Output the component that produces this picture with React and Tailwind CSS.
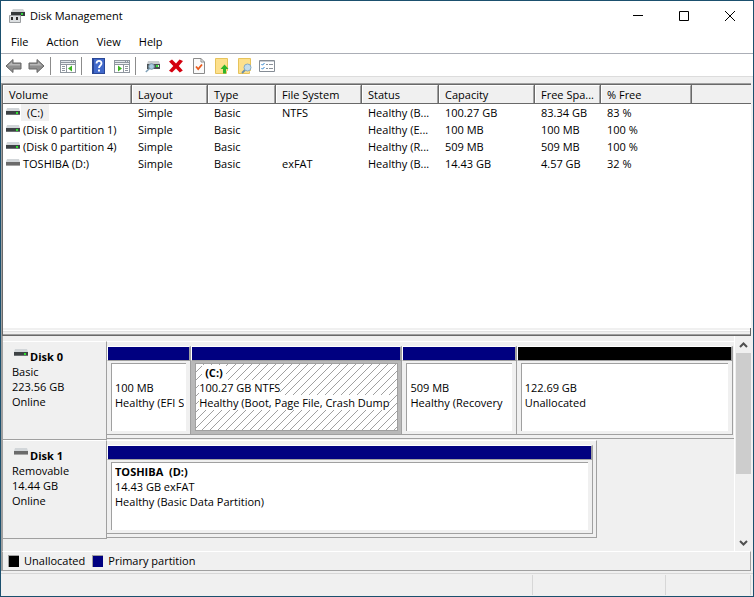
import React from "react";

const columns = [
  { name: "Volume", width: "w-[129px]" },
  { name: "Layout", width: "w-[76px]" },
  { name: "Type", width: "w-[68px]" },
  { name: "File System", width: "w-[86px]" },
  { name: "Status", width: "w-[77px]" },
  { name: "Capacity", width: "w-[96px]" },
  { name: "Free Spa...", width: "w-[66px]" },
  { name: "% Free", width: "w-[91px]" },
];

const volumes = [
  { name: "(C:)", led: true, selected: true, cells: ["Simple", "Basic", "NTFS", "Healthy (B...", "100.27 GB", "83.34 GB", "83 %"] },
  { name: "(Disk 0 partition 1)", led: true, cells: ["Simple", "Basic", "", "Healthy (E...", "100 MB", "100 MB", "100 %"] },
  { name: "(Disk 0 partition 4)", led: true, cells: ["Simple", "Basic", "", "Healthy (R...", "509 MB", "509 MB", "100 %"] },
  { name: "TOSHIBA (D:)", led: false, cells: ["Simple", "Basic", "exFAT", "Healthy (B...", "14.43 GB", "4.57 GB", "32 %"] },
];

const disks = [
  {
    name: "Disk 0", led: true, lines: ["Basic", "223.56 GB", "Online"], wide: true,
    parts: [
      { share: 84, title: "", lines: ["100 MB", "Healthy (EFI S"], color: "bg-[#000080]" },
      { share: 211, title: "(C:)", lines: ["100.27 GB NTFS", "Healthy (Boot, Page File, Crash Dump"], color: "bg-[#000080]", selected: true },
      { share: 114, title: "", lines: ["509 MB", "Healthy (Recovery"], color: "bg-[#000080]" },
      { share: 216, title: "", lines: ["122.69 GB", "Unallocated"], color: "bg-black" },
    ],
  },
  {
    name: "Disk 1", led: false, lines: ["Removable", "14.44 GB", "Online"], wide: false,
    parts: [
      { share: 1, title: "TOSHIBA  (D:)", lines: ["14.43 GB exFAT", "Healthy (Basic Data Partition)"], color: "bg-[#000080]" },
    ],
  },
];

function DriveIcon({ led }) {
  return (
    <svg width="14" height="9" viewBox="0 0 14 9" className="shrink-0" aria-hidden="true">
      <path d="M1 0h12l1 3H0z" fill="#d2d6d9" />
      <path d="M0 3h14v4H0z" fill={led ? "#3d4144" : "#6b6b6b"} />
      <path d="M0 6h14v1H0z" fill={led ? "#6d7174" : "#a5a5a5"} />
      {led && <path d="M10 4h2v2h-2z" fill="#2fe02f" />}
    </svg>
  );
}

function AppIcon() {
  return (
    <svg width="16" height="16" viewBox="0 0 16 16" aria-hidden="true">
      <path d="M4 1h10l2 3H2z" fill="#cfd2d4" />
      <path d="M2 4h14v4H2z" fill="#35393b" />
      <path d="M12 5h2v2h-2z" fill="#2fd13a" />
      <path d="M2 7h9v3H2z" fill="#e4e6e8" />
      <path d="M.5 7.500h11v7H.5z" fill="#dcdfe1" stroke="#9a9da0" />
      <path d="M2 9h2v3H2zM7 9h2v3H7z" fill="#2c2c2c" />
    </svg>
  );
}

function Arrow({ flip }) {
  return (
    <svg width="17" height="16" viewBox="0 0 17 16" className={flip ? "-scale-x-100" : ""} aria-hidden="true">
      <path d="M1 8L8 1.500V5h8v6H8v3.500z" fill="#8f8f8f" stroke="#666" strokeLinejoin="round" />
      <path d="M3 7.500L7 4v2h8v1.500z" fill="#b8b8b8" />
    </svg>
  );
}

function PaneIcon({ right }) {
  return (
    <svg width="16" height="16" viewBox="0 0 16 16" aria-hidden="true">
      <path d="M0 2h16v13H0z" fill="#8f969f" />
      <path d="M1 3h10v1H1zM12 3h1v1h-1zM14 3h1v1h-1z" fill="#dfe4ea" />
      <path d="M1 5h14v1H1z" fill="#eef0f3" />
      <path d={right ? "M1 7h8v7H1zM10 7h5v7h-5z" : "M1 7h5v7H1zM7 7h8v7H7z"} fill="#fff" />
      <path d={right ? "M11 8h3v1h-3zM11 10h3v1h-3zM11 12h3v1h-3z" : "M2 8h3v1H2zM2 10h3v1H2zM2 12h3v1H2z"} fill="#8f969f" />
      <path d={right ? "M4 7.500l4 3-4 3z" : "M12 7.500l-4 3 4 3z"} fill="#3cb521" />
    </svg>
  );
}

function HelpIcon() {
  return (
    <svg width="14" height="16" viewBox="0 0 14 16" aria-hidden="true">
      <path d="M0 0h13v16H0z" fill="#2a4796" />
      <path d="M2 1h10v14H2z" fill="#4169cb" />
      <path d="M4.500 5.500c0-3.500 5-3.500 5 0 0 2-2.500 2-2.500 4.500" fill="none" stroke="#fff" strokeWidth="1.800" />
      <path d="M6 11.500h2v2H6z" fill="#fff" />
    </svg>
  );
}

function DriveSearchIcon() {
  return (
    <svg width="16" height="16" viewBox="0 0 16 16" aria-hidden="true">
      <path d="M3 3h11l1 3H2z" fill="#c9cccf" />
      <path d="M2 6h13v5H2z" fill="#4a4f52" />
      <path d="M11 7h2v2h-2z" fill="#35e03b" />
      <path d="M13 7h1v2h-1z" fill="#d8f0d8" />
      <path d="M4.500 10.500L.8 14" stroke="#7fa0b8" strokeWidth="1.500" />
      <circle cx="6.500" cy="8.500" r="2.800" fill="#a9cbe0" stroke="#7795a8" />
    </svg>
  );
}

function DeleteIcon() {
  return (
    <svg width="16" height="16" viewBox="0 0 16 16" aria-hidden="true">
      <path d="M1 3.500L4 1.500l4 4 3.500-4L15 3l-4.200 5 4 4.500-3 2L8 10.500 4 14.500l-3-1.800L5.300 8z" fill="#d4000f" />
    </svg>
  );
}

function CheckDocIcon() {
  return (
    <svg width="14" height="16" viewBox="0 0 14 16" aria-hidden="true">
      <path d="M1.500.5H9L12.500 4v11.500h-11z" fill="#fafafa" stroke="#8b8b8b" />
      <path d="M9 .5V4h3.500" fill="none" stroke="#8b8b8b" />
      <path d="M4 8.500l2.200 2.500L10 6.500" fill="none" stroke="#ea5a1c" strokeWidth="1.800" />
    </svg>
  );
}

function NoteIcon({ search }) {
  return (
    <svg width="16" height="16" viewBox="0 0 16 16" aria-hidden="true">
      <path d="M1.500.5h12v12l-1 1v2h-11z" fill="#fde08c" stroke="#e6c35c" />
      {search ? (
        <g>
          <path d="M8.500 11.500L5 15" stroke="#6b8fa8" strokeWidth="1.800" />
          <circle cx="10.500" cy="9.500" r="3.500" fill="#c3dcec" stroke="#86aac2" />
        </g>
      ) : (
        <path d="M10.500 6.500l4 4.500H12v4.500H9V11H6.500z" fill="#2fb52a" />
      )}
    </svg>
  );
}

function ChecklistIcon() {
  return (
    <svg width="17" height="16" viewBox="0 0 17 16" aria-hidden="true">
      <path d="M.5 2.500h15v11H.5z" fill="#fff" stroke="#858c95" />
      <path d="M1 3h14v1H1z" fill="#c9ced4" />
      <path d="M2.500 6l1 1.200L5.500 5M2.500 10l1 1.200L5.500 9" fill="none" stroke="#2f86d0" />
      <path d="M7 6.500h2M10 6.500h4M7 10.500h2M10 10.500h4" stroke="#8b929b" />
    </svg>
  );
}

function Separator() {
  return <div className="h-[18px] w-2 pl-0.5"><div className="h-full w-px bg-[#8c8c8c]" /></div>;
}

function Tool({ label, children }) {
  return (
    <button type="button" aria-label={label} className="flex h-5 w-[23px] items-center justify-center">
      {children}
    </button>
  );
}

function Hatch() {
  return (
    <svg className="absolute inset-0 h-full w-full" aria-hidden="true">
      <defs>
        <pattern id="hatch" width="8" height="8" patternUnits="userSpaceOnUse">
          <path
            shapeRendering="crispEdges"
            fill="#a0a0a0"
            d="M7 0h1v1h-1zM6 1h1v1h-1zM5 2h1v1h-1zM4 3h1v1h-1zM3 4h1v1h-1zM2 5h1v1h-1zM1 6h1v1h-1zM0 7h1v1h-1z"
          />
        </pattern>
      </defs>
      <rect width="100%" height="100%" fill="url(#hatch)" />
    </svg>
  );
}

function Partition({ part }) {
  return (
    <div className="flex min-w-0 basis-0 flex-col" style={{ flexGrow: part.share }}>
      <div className="border-t border-r-2 border-b border-l border-t-white border-r-[#a0a0a0] border-b-[#a0a0a0] border-l-white">
        <div className={`h-[13px] ${part.color}`} />
      </div>
      <div className={`flex h-[74px] flex-col border-r border-b border-[#a0a0a0] pt-0.5 pb-[3px] pl-1 ${part.selected ? "bg-[#b9b9b9] pr-[3px]" : "bg-[#f0f0f0] pr-1"}`}>
        <div className={`relative min-h-0 grow overflow-hidden border-t border-l border-[#a0a0a0] bg-white pt-px pr-0.5 pl-[3px] ${part.selected ? "border-r border-b" : ""}`}>
          {part.selected && <Hatch />}
          <div className="relative flex flex-col items-start overflow-hidden leading-[15px] whitespace-pre">
            <b className={`h-[15px] ${part.selected ? "ml-[3px] bg-white px-[3px]" : ""}`}>{part.title}</b>
            {part.lines.map((line) => (
              <span key={line} className="bg-white">{line}</span>
            ))}
          </div>
        </div>
      </div>
    </div>
  );
}

function Disk({ disk }) {
  return (
    <div className="flex h-[99px]">
      <div className="w-[104px] shrink-0 border-t border-r border-b border-t-white border-r-[#a0a0a0] border-b-[#a0a0a0] pt-[7px] pl-[9px] leading-[15px]">
        <div className="flex gap-[2px] pl-[2px]">
          <DriveIcon led={disk.led} />
          <b>{disk.name}</b>
        </div>
        {disk.lines.map((line) => <div key={line}>{line}</div>)}
      </div>
      <div className={`h-[98px] min-w-0 border-t border-b border-t-white border-b-[#a0a0a0] pt-1 ${disk.wide ? "grow pr-px" : "w-[490px] border-r border-r-[#a0a0a0] pr-[3px]"}`}>
        <div className="flex">
          {disk.parts.map((part) => <Partition key={part.lines[0]} part={part} />)}
        </div>
      </div>
    </div>
  );
}

function Chevron({ down }) {
  return (
    <svg width="9" height="6" viewBox="0 0 9 6" className={down ? "rotate-180" : ""} aria-hidden="true">
      <path d="M1 5l3.500-3.500L8 5" fill="none" stroke="#505050" strokeWidth="2" />
    </svg>
  );
}

export default function App() {
  return (
    <div className="flex h-screen flex-col border border-[#1b506e] bg-[#f0f0f0] font-['Open_Sans','Noto_Sans',sans-serif] text-[11px] text-black">
      <header className="flex h-[30px] shrink-0 items-center bg-white pl-2">
        <AppIcon />
        <h1 className="grow pl-[5px]">Disk Management</h1>
        <button type="button" aria-label="Minimize" className="flex h-full w-[46px] items-center justify-center">
          <svg width="10" height="10" shapeRendering="crispEdges"><path d="M0 4h10v1H0z" /></svg>
        </button>
        <button type="button" aria-label="Maximize" className="flex h-full w-[46px] items-center justify-center">
          <svg width="10" height="10"><path d="M.5.5h9v9h-9z" fill="none" stroke="#000" /></svg>
        </button>
        <button type="button" aria-label="Close" className="flex h-full w-[46px] items-center justify-center">
          <svg width="10" height="10"><path d="M0 0l10 10M10 0L0 10" stroke="#000" /></svg>
        </button>
      </header>
      <nav className="flex h-[23px] shrink-0 items-center border-b border-[#abaeb6] bg-white pl-px">
        {["File", "Action", "View", "Help"].map((item) => (
          <button key={item} type="button" className="px-[9px]">{item}</button>
        ))}
      </nav>
      <div className="flex h-[23px] shrink-0 items-center border-b border-[#dcdcdc] bg-white pt-0.5 pl-px">
        <Tool label="Back"><Arrow /></Tool>
        <Tool label="Forward"><Arrow flip /></Tool>
        <Separator />
        <Tool label="Show console tree"><PaneIcon /></Tool>
        <Separator />
        <Tool label="Help"><HelpIcon /></Tool>
        <Tool label="Show action pane"><PaneIcon right /></Tool>
        <Separator />
        <Tool label="Rescan disks"><DriveSearchIcon /></Tool>
        <Tool label="Delete"><DeleteIcon /></Tool>
        <Tool label="Properties"><CheckDocIcon /></Tool>
        <Tool label="Open"><NoteIcon /></Tool>
        <Tool label="Explore"><NoteIcon search /></Tool>
        <Tool label="Settings"><ChecklistIcon /></Tool>
      </div>

      <main className="mt-[6px] mr-[2px] mb-0.5 flex min-h-0 grow flex-col border-t border-l border-[#a0a0a0]">
        <section className="h-[244px] shrink-0 border-t border-l border-[#696969] bg-white">
          <table className="w-full table-fixed border-separate border-spacing-0 text-left">
            <colgroup>
              {columns.map((c) => <col key={c.name} className={c.width} />)}
              <col />
            </colgroup>
            <thead>
              <tr className="h-[19px] leading-[17px]">
                {columns.map((c) => (
                  <th key={c.name} className="border-r border-b border-[#696969] bg-[#f0f0f0] p-0 font-normal">
                    <div className="border-t border-r border-l border-t-white border-r-[#a0a0a0] border-l-white pl-[5px] whitespace-nowrap">{c.name}</div>
                  </th>
                ))}
                <th className="border-b border-[#696969] bg-[#f0f0f0] p-0" aria-label="Unused" />
              </tr>
            </thead>
            <tbody>
              {volumes.map((v) => (
                <tr key={v.name} className="h-[17px] leading-[17px] whitespace-nowrap">
                  <td className="p-0 pl-[3px]">
                    <div className="flex items-center gap-px">
                      <DriveIcon led={v.led} />
                      <span className={v.selected ? "bg-[#f0f0f0] px-[6px]" : "pl-[2px]"}>{v.name}</span>
                    </div>
                  </td>
                  {v.cells.map((cell, i) => <td key={i} className="p-0 pl-[6px]">{cell}</td>)}
                  <td className="p-0" />
                </tr>
              ))}
            </tbody>
          </table>
        </section>
        <div className="flex h-2 shrink-0 flex-col border-r border-b border-l border-[#696969] bg-[#f0f0f0] pt-0.5">
          <div className="h-px bg-white" />
          <div className="h-px bg-[#e3e3e3]" />
          <div className="mt-auto h-px bg-[#a0a0a0]" />
        </div>

        <section className="flex min-h-0 grow border-l border-[#a0a0a0]">
          <div className="min-w-0 grow overflow-hidden border-r border-white pt-[5px]">
            {disks.map((disk) => <Disk key={disk.name} disk={disk} />)}
          </div>
          <div className="flex w-4 shrink-0 flex-col items-center justify-between pt-1.5 pb-[5px]">
            <Chevron />
            <div className="mt-[5px] mb-auto h-[121px] w-[15px] bg-[#cdcdcd]" />
            <Chevron down />
          </div>
        </section>
        <footer className="flex h-5 shrink-0 items-center border-t border-r border-b border-l border-t-white border-r-[#a0a0a0] border-b-[#a0a0a0] border-l-[#a0a0a0] pl-[5px]">
          <span className="mr-[5px] h-3 w-[11px] border-t border-l border-[#a0a0a0] bg-black" />
          <span>Unallocated</span>
          <span className="mr-[5px] ml-[7px] h-3 w-[11px] border-t border-l border-[#a0a0a0] bg-[#000080]" />
          <span>Primary partition</span>
        </footer>
      </main>
      <div className="flex h-[23px] shrink-0 border-t border-[#d7d7d7] pt-px pr-0.5 pb-px">
        <div className="grow border-r border-[#d7d7d7]" />
        <div className="w-[133px] border-r border-[#d7d7d7]" />
        <div className="w-[85px] border-r border-[#d7d7d7]" />
      </div>
    </div>
  );
}
